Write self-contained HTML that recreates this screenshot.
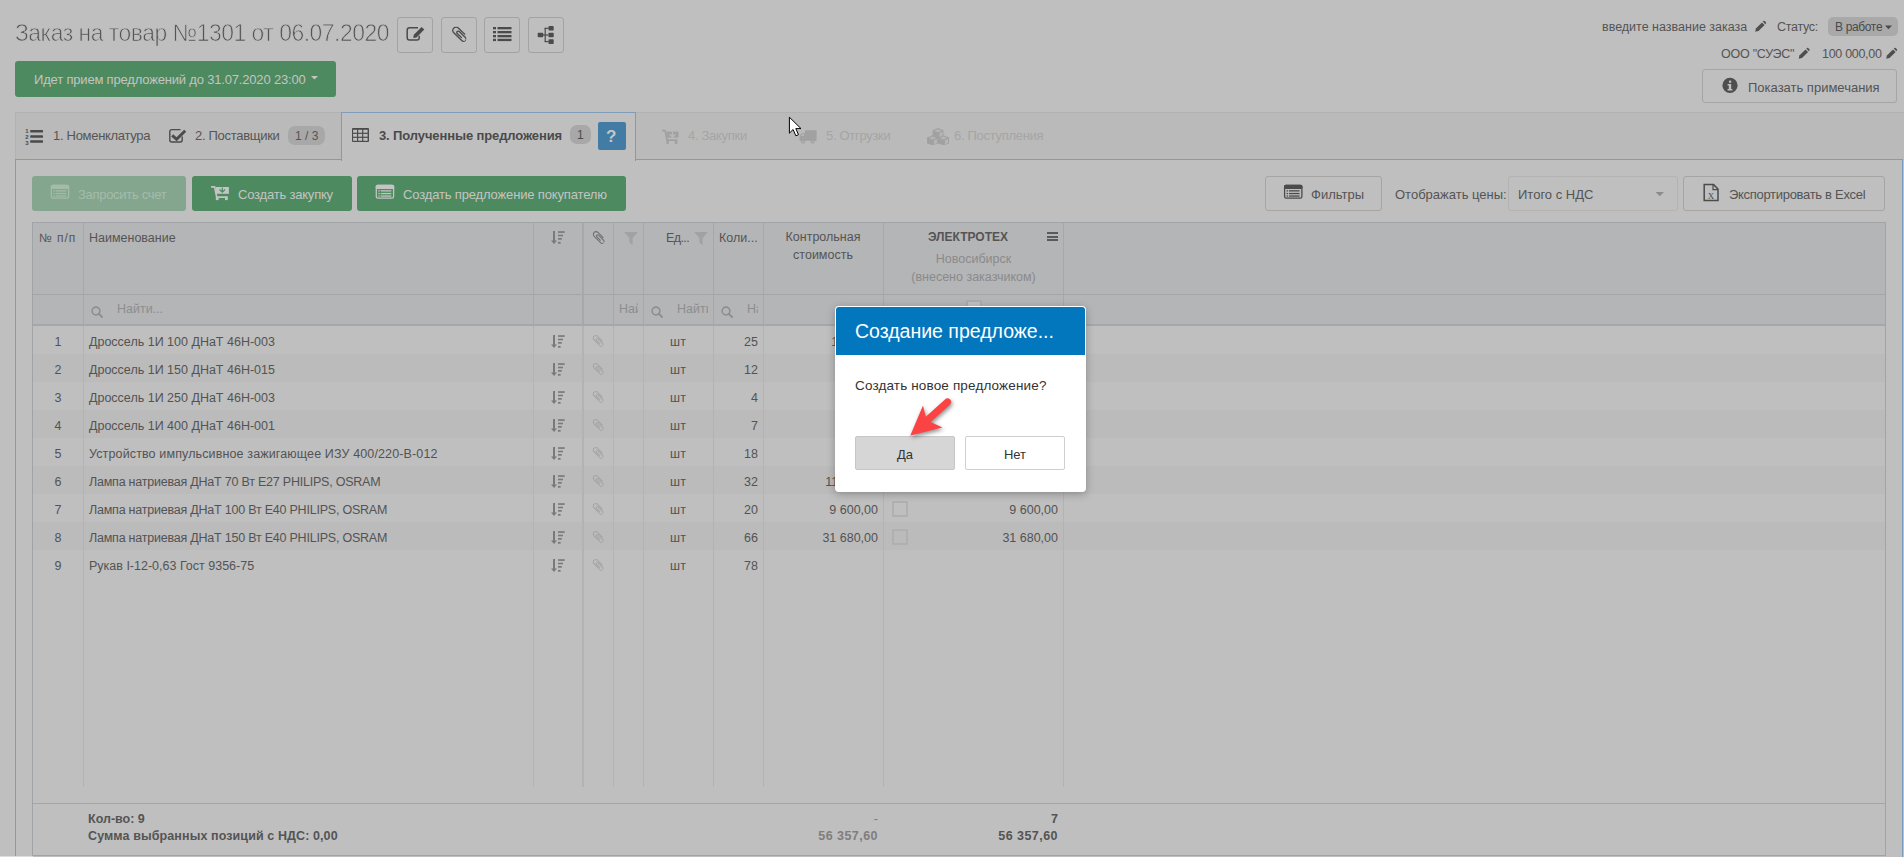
<!DOCTYPE html>
<html><head><meta charset="utf-8">
<style>
*{box-sizing:border-box}
html,body{margin:0;padding:0}
body{width:1904px;height:857px;overflow:hidden;position:relative;background:#bfbfbf;font-family:"Liberation Sans",sans-serif;color:#535353}
.a{position:absolute}
.t{position:absolute;white-space:nowrap;line-height:1}
.ib{position:absolute;top:17px;width:36px;height:36px;border:1px solid #a3a3a3;border-radius:3px}
.ib svg{position:absolute}
.gbtn{position:absolute;background:#4e8a5f;border-radius:3px}
.wbtn{position:absolute;border:1px solid #a5a5a5;border-radius:3px}
.tabbar{position:absolute;left:15px;top:112px;width:1889px;height:48px;background:#bababa;border-top:1px solid #b1b2b4;border-left:1px solid #b1b2b4}
.panel{position:absolute;left:15px;top:159px;width:1888px;height:720px;border:1px solid #7c9cb9}
.acttab{position:absolute;left:341px;top:112px;width:295px;height:49px;background:#bfbfbf;border:1px solid #7c9cb9;border-bottom:none}
.badge{position:absolute;background:#a8a8a8;border-radius:9px}
.grid{position:absolute;left:32px;top:222px;width:1854px;height:634px;border:1px solid #a1a4a7}
.hdr{position:absolute;left:33px;top:223px;width:1852px;height:101px;background:#b4b5b7}
.hl{position:absolute;height:1px;background:#a3a5a8}
.vl{position:absolute;width:1px;background:#a8a8a8}
.row2{position:absolute;left:33px;width:1852px;height:28px;background:#bbbbbb}

.c1{left:33px;width:50px;text-align:center;font-size:12.5px;color:#535353}
.c2{left:89px;font-size:12.5px;color:#535353}
.c5{left:643px;width:70px;text-align:center;font-size:12.5px;color:#535353}
.c6{left:713px;width:45px;text-align:right;font-size:12.5px;color:#535353}
.c7{left:763px;width:115px;text-align:right;font-size:12.5px;color:#535353}
.c8{left:883px;width:175px;text-align:right;font-size:12.5px;color:#535353}
.sorti{left:551px}
.clipi{left:592px}
.cb{left:892px;width:16px;height:16px;border:2px solid #b0b0b0;border-radius:1px}
.ht{position:absolute;white-space:nowrap;line-height:1;font-size:12.5px;color:#545454}
</style></head><body>


<svg width="0" height="0" style="position:absolute">
<defs>
<symbol id="sorticon" viewBox="0 0 14 13">
 <rect x="2" y="0" width="2" height="10" fill="#7a7a7a"/>
 <path d="M0 9.5 H6 L3 13 Z" fill="#7a7a7a"/>
 <rect x="7" y="0.2" width="6.7" height="1.7" fill="#7a7a7a"/>
 <rect x="7" y="3.7" width="5" height="1.6" fill="#7a7a7a"/>
 <rect x="7" y="7" width="3.8" height="1.7" fill="#7a7a7a"/>
 <rect x="7" y="10.9" width="2.6" height="1.8" fill="#7a7a7a"/>
</symbol>
<symbol id="clipicon" viewBox="-90 170 1345 1520">
 <path fill="#a4a4a4" d="M1248 1420q0 107-76 185t-181 78q-107 0-183-76l-777-776q-113-115-113-271 0-159 110-270t269-111q158 0 273 113l605 606q10 10 10 22 0 16-30.5 46.5t-46.5 30.5q-13 0-23-10l-606-607q-79-77-181-77-106 0-179 75t-73 181q0 105 76 181l776 777q63 63 145 63 64 0 106-42t42-106q0-82-63-145l-581-581q-26-24-60-24-29 0-48 19t-19 48q0 32 25 60l410 410q10 10 10 22 0 16-31 47t-47 31q-12 0-22-10l-410-410q-63-61-63-149 0-82 57-139t139-57q88 0 149 63l581 581q100 98 100 235z"/>
</symbol>
<symbol id="searchicon" viewBox="0 0 12 12">
 <circle cx="5" cy="5" r="3.9" fill="none" stroke="#8e8e8e" stroke-width="1.6"/>
 <path d="M7.8 7.8 L11 11" stroke="#8e8e8e" stroke-width="1.9" stroke-linecap="round"/>
</symbol>
<symbol id="funnel" viewBox="0 0 14 13">
 <path d="M0 0 H14 L8.6 6 V13 L5.4 10.5 V6 Z" fill="#a2a2a2"/>
</symbol>
<symbol id="pencil" viewBox="0 0 12 12">
 <path d="M0.5 11.5 L1.3 8.2 L8.3 1.2 L10.8 3.7 L3.8 10.7 Z" fill="#555"/>
 <path d="M9 0.5 L9.8 -0.3 Q10.5 -0.8 11.2 -0.1 L12.1 0.8 Q12.8 1.5 12.1 2.2 L11.5 3 Z" fill="#555"/>
</symbol>
<symbol id="listalt" viewBox="0 0 18 14">
 <rect x="0.8" y="0.8" width="16.4" height="12.4" rx="1.5" fill="none" stroke="currentColor" stroke-width="1.6"/>
 <rect x="0.8" y="0.8" width="16.4" height="2.6" fill="currentColor"/>
 <rect x="3" y="5" width="1.6" height="1.4" fill="currentColor"/>
 <rect x="5.6" y="5" width="9.4" height="1.4" fill="currentColor"/>
 <rect x="3" y="7.6" width="1.6" height="1.4" fill="currentColor"/>
 <rect x="5.6" y="7.6" width="9.4" height="1.4" fill="currentColor"/>
 <rect x="3" y="10.2" width="1.6" height="1.4" fill="currentColor"/>
 <rect x="5.6" y="10.2" width="9.4" height="1.4" fill="currentColor"/>
</symbol>
</defs></svg>

<!-- ===== TITLE ===== -->
<div class="t" style="left:15px;top:21px;font-size:24px;color:#555;letter-spacing:-0.52px;-webkit-text-stroke:0.75px #bfbfbf;transform:scaleX(0.955);transform-origin:0 0">Заказ на товар №1301 от 06.07.2020</div>

<!-- icon buttons -->
<div class="ib" style="left:397px"></div>
<div class="ib" style="left:441px"></div>
<div class="ib" style="left:484px"></div>
<div class="ib" style="left:528px"></div>

<!-- green status button -->
<div class="gbtn" style="left:15px;top:61px;width:321px;height:36px"></div>
<div class="t" style="left:34px;top:73px;font-size:13px;color:#c4c4c4;letter-spacing:-0.18px">Идет прием предложений до 31.07.2020 23:00</div>

<!-- top right -->
<div class="t" style="left:1602px;top:21px;font-size:12.5px;color:#545454">введите название заказа</div>
<div class="t" style="left:1777px;top:21px;font-size:12.5px;color:#545454;letter-spacing:-0.3px">Статус:</div>
<div class="badge" style="left:1828px;top:17px;width:70px;height:19px;border-radius:5px;background:#a9a9a9"></div>
<div class="t" style="left:1835px;top:21px;font-size:12px;color:#4a4a4a;letter-spacing:-0.35px">В работе</div>
<div class="t" style="left:1721px;top:48px;font-size:12.5px;color:#545454;letter-spacing:-0.25px">ООО "СУЭС"</div>
<div class="t" style="left:1822px;top:48px;font-size:12.5px;color:#545454;letter-spacing:-0.3px">100 000,00</div>
<div class="wbtn" style="left:1702px;top:69px;width:195px;height:34px"></div>
<div class="t" style="left:1748px;top:81px;font-size:13px;color:#545454">Показать примечания</div>

<!-- ===== TABS ===== -->
<div class="tabbar"></div>
<div class="panel"></div>
<div class="acttab"></div>

<div class="t" style="left:53px;top:129px;font-size:13px;color:#555;letter-spacing:-0.3px">1. Номенклатура</div>
<div class="t" style="left:195px;top:129px;font-size:13px;color:#555;letter-spacing:-0.3px">2. Поставщики</div>
<div class="badge" style="left:288px;top:126px;width:37px;height:19px;border-radius:7px"></div>
<div class="t" style="left:295px;top:130px;font-size:12px;color:#545454">1 / 3</div>
<div class="t" style="left:379px;top:129px;font-size:13px;color:#4a4a4a;font-weight:bold;letter-spacing:-0.12px">3. Полученные предложения</div>
<div class="badge" style="left:570px;top:125px;width:21px;height:19px;border-radius:7px"></div>
<div class="t" style="left:577px;top:129px;font-size:12px;color:#4a4a4a">1</div>
<div class="a" style="left:598px;top:122px;width:28px;height:28px;background:#427ca4;border-radius:2px"></div>
<div class="t" style="left:606px;top:128px;font-size:17px;color:#c6c6c6;font-weight:bold">?</div>
<div class="t" style="left:688px;top:129px;font-size:13px;color:#a5a5a5;letter-spacing:-0.3px">4. Закупки</div>
<div class="t" style="left:826px;top:129px;font-size:13px;color:#a5a5a5;letter-spacing:-0.3px">5. Отгрузки</div>
<div class="t" style="left:954px;top:129px;font-size:13px;color:#a5a5a5;letter-spacing:-0.3px">6. Поступления</div>

<!-- ===== TOOLBAR ===== -->
<div class="gbtn" style="left:32px;top:176px;width:154px;height:35px;background:#84a68e"></div>
<div class="t" style="left:78px;top:188px;font-size:13px;color:#a4bcaa;letter-spacing:-0.3px">Запросить счет</div>
<div class="gbtn" style="left:192px;top:176px;width:160px;height:35px"></div>
<div class="t" style="left:238px;top:188px;font-size:13px;color:#c4c4c4;letter-spacing:-0.2px">Создать закупку</div>
<div class="gbtn" style="left:357px;top:176px;width:269px;height:35px"></div>
<div class="t" style="left:403px;top:188px;font-size:13px;color:#c4c4c4;letter-spacing:-0.15px">Создать предложение покупателю</div>

<div class="wbtn" style="left:1265px;top:176px;width:117px;height:35px"></div>
<div class="t" style="left:1311px;top:188px;font-size:13px;color:#545454">Фильтры</div>
<div class="t" style="left:1395px;top:188px;font-size:13px;color:#545454">Отображать цены:</div>
<div class="wbtn" style="left:1508px;top:176px;width:170px;height:35px;border-color:#b3b3b3"></div>
<div class="t" style="left:1518px;top:188px;font-size:13px;color:#545454">Итого с НДС</div>
<div class="wbtn" style="left:1683px;top:176px;width:202px;height:35px"></div>
<div class="t" style="left:1729px;top:188px;font-size:13px;color:#545454;letter-spacing:-0.3px">Экспортировать в Excel</div>

<!-- ===== GRID ===== -->
<div class="grid"></div>
<div class="hdr"></div>


<!-- header lines -->
<div class="hl" style="left:33px;top:294px;width:1852px"></div>
<div class="hl" style="left:33px;top:324px;width:1852px;height:2px;background:#a5a7aa"></div>
<div class="row2" style="top:354px"></div>
<div class="row2" style="top:410px"></div>
<div class="row2" style="top:466px"></div>
<div class="row2" style="top:522px"></div>
<div class="t c1" style="top:336px">1</div>
<div class="t c2" style="top:336px">Дроссель 1И 100 ДНаТ 46Н-003</div>
<svg class="a sorti" style="top:335px" width="14" height="13"><use href="#sorticon"/></svg>
<svg class="a clipi" style="top:335px" width="12" height="12"><use href="#clipicon"/></svg>
<div class="t c5" style="top:336px">шт</div>
<div class="t c6" style="top:336px">25</div>
<div class="t c7" style="top:336px;left:765px">1 312,50</div>
<div class="t c1" style="top:364px">2</div>
<div class="t c2" style="top:364px">Дроссель 1И 150 ДНаТ 46Н-015</div>
<svg class="a sorti" style="top:363px" width="14" height="13"><use href="#sorticon"/></svg>
<svg class="a clipi" style="top:363px" width="12" height="12"><use href="#clipicon"/></svg>
<div class="t c5" style="top:364px">шт</div>
<div class="t c6" style="top:364px">12</div>
<div class="t c1" style="top:392px">3</div>
<div class="t c2" style="top:392px">Дроссель 1И 250 ДНаТ 46Н-003</div>
<svg class="a sorti" style="top:391px" width="14" height="13"><use href="#sorticon"/></svg>
<svg class="a clipi" style="top:391px" width="12" height="12"><use href="#clipicon"/></svg>
<div class="t c5" style="top:392px">шт</div>
<div class="t c6" style="top:392px">4</div>
<div class="t c1" style="top:420px">4</div>
<div class="t c2" style="top:420px">Дроссель 1И 400 ДНаТ 46Н-001</div>
<svg class="a sorti" style="top:419px" width="14" height="13"><use href="#sorticon"/></svg>
<svg class="a clipi" style="top:419px" width="12" height="12"><use href="#clipicon"/></svg>
<div class="t c5" style="top:420px">шт</div>
<div class="t c6" style="top:420px">7</div>
<div class="t c1" style="top:448px">5</div>
<div class="t c2" style="top:448px;letter-spacing:0.13px">Устройство импульсивное зажигающее ИЗУ 400/220-В-012</div>
<svg class="a sorti" style="top:447px" width="14" height="13"><use href="#sorticon"/></svg>
<svg class="a clipi" style="top:447px" width="12" height="12"><use href="#clipicon"/></svg>
<div class="t c5" style="top:448px">шт</div>
<div class="t c6" style="top:448px">18</div>
<div class="t c1" style="top:476px">6</div>
<div class="t c2" style="top:476px;letter-spacing:-0.22px">Лампа натриевая ДНаТ 70 Вт Е27 PHILIPS, OSRAM</div>
<svg class="a sorti" style="top:475px" width="14" height="13"><use href="#sorticon"/></svg>
<svg class="a clipi" style="top:475px" width="12" height="12"><use href="#clipicon"/></svg>
<div class="t c5" style="top:476px">шт</div>
<div class="t c6" style="top:476px">32</div>
<div class="t c7" style="top:476px;left:765px">11 520,00</div>
<div class="t c1" style="top:504px">7</div>
<div class="t c2" style="top:504px;letter-spacing:-0.22px">Лампа натриевая ДНаТ 100 Вт Е40 PHILIPS, OSRAM</div>
<svg class="a sorti" style="top:503px" width="14" height="13"><use href="#sorticon"/></svg>
<svg class="a clipi" style="top:503px" width="12" height="12"><use href="#clipicon"/></svg>
<div class="t c5" style="top:504px">шт</div>
<div class="t c6" style="top:504px">20</div>
<div class="t c7" style="top:504px">9 600,00</div>
<div class="a cb" style="top:501px"></div>
<div class="t c8" style="top:504px">9 600,00</div>
<div class="t c1" style="top:532px">8</div>
<div class="t c2" style="top:532px;letter-spacing:-0.22px">Лампа натриевая ДНаТ 150 Вт Е40 PHILIPS, OSRAM</div>
<svg class="a sorti" style="top:531px" width="14" height="13"><use href="#sorticon"/></svg>
<svg class="a clipi" style="top:531px" width="12" height="12"><use href="#clipicon"/></svg>
<div class="t c5" style="top:532px">шт</div>
<div class="t c6" style="top:532px">66</div>
<div class="t c7" style="top:532px">31 680,00</div>
<div class="a cb" style="top:529px"></div>
<div class="t c8" style="top:532px">31 680,00</div>
<div class="t c1" style="top:560px">9</div>
<div class="t c2" style="top:560px">Рукав I-12-0,63 Гост 9356-75</div>
<svg class="a sorti" style="top:559px" width="14" height="13"><use href="#sorticon"/></svg>
<svg class="a clipi" style="top:559px" width="12" height="12"><use href="#clipicon"/></svg>
<div class="t c5" style="top:560px">шт</div>
<div class="t c6" style="top:560px">78</div>
<!-- vertical lines -->
<div class="vl" style="left:83px;top:223px;height:101px;width:1px;background:#a6a8ab"></div>
<div class="vl" style="left:83px;top:326px;height:461px;width:1px;background:#b2b3b5"></div>
<div class="vl" style="left:533px;top:223px;height:101px;width:1px;background:#a6a8ab"></div>
<div class="vl" style="left:533px;top:326px;height:461px;width:1px;background:#b2b3b5"></div>
<div class="vl" style="left:582px;top:223px;height:101px;width:2px;background:#a6a8ab"></div>
<div class="vl" style="left:582px;top:326px;height:461px;width:2px;background:#b2b3b5"></div>
<div class="vl" style="left:613px;top:223px;height:101px;width:1px;background:#a6a8ab"></div>
<div class="vl" style="left:613px;top:326px;height:461px;width:1px;background:#b2b3b5"></div>
<div class="vl" style="left:643px;top:223px;height:101px;width:1px;background:#a6a8ab"></div>
<div class="vl" style="left:643px;top:326px;height:461px;width:1px;background:#b2b3b5"></div>
<div class="vl" style="left:713px;top:223px;height:101px;width:1px;background:#a6a8ab"></div>
<div class="vl" style="left:713px;top:326px;height:461px;width:1px;background:#b2b3b5"></div>
<div class="vl" style="left:763px;top:223px;height:101px;width:1px;background:#a6a8ab"></div>
<div class="vl" style="left:763px;top:326px;height:461px;width:1px;background:#b2b3b5"></div>
<div class="vl" style="left:883px;top:223px;height:101px;width:1px;background:#a6a8ab"></div>
<div class="vl" style="left:883px;top:326px;height:461px;width:1px;background:#b2b3b5"></div>
<div class="vl" style="left:1063px;top:223px;height:101px;width:1px;background:#a6a8ab"></div>
<div class="vl" style="left:1063px;top:326px;height:461px;width:1px;background:#b2b3b5"></div>

<!-- header texts -->
<div class="ht" style="left:39px;top:232px;font-size:12px;letter-spacing:0.9px">№ п/п</div>
<div class="ht" style="left:89px;top:232px">Наименование</div>
<svg class="a" style="left:551px;top:231px" width="14" height="13"><use href="#sorticon"/></svg>
<svg class="a" style="left:592px;top:231px" width="13" height="13" viewBox="-90 170 1345 1520"><path fill="#707070" d="M1248 1420q0 107-76 185t-181 78q-107 0-183-76l-777-776q-113-115-113-271 0-159 110-270t269-111q158 0 273 113l605 606q10 10 10 22 0 16-30.5 46.5t-46.5 30.5q-13 0-23-10l-606-607q-79-77-181-77-106 0-179 75t-73 181q0 105 76 181l776 777q63 63 145 63 64 0 106-42t42-106q0-82-63-145l-581-581q-26-24-60-24-29 0-48 19t-19 48q0 32 25 60l410 410q10 10 10 22 0 16-31 47t-47 31q-12 0-22-10l-410-410q-63-61-63-149 0-82 57-139t139-57q88 0 149 63l581 581q100 98 100 235z"/></svg>
<svg class="a" style="left:624px;top:232px" width="14" height="13"><use href="#funnel"/></svg>
<div class="ht" style="left:666px;top:232px;letter-spacing:-0.6px">Ед...</div>
<svg class="a" style="left:694px;top:232px" width="14" height="13"><use href="#funnel"/></svg>
<div class="ht" style="left:719px;top:232px">Коли...</div>
<div class="ht" style="left:763px;top:232px;width:120px;text-align:center;line-height:18px;top:228px;white-space:normal">Контрольная<br>стоимость</div>
<div class="ht" style="left:883px;top:231px;width:170px;text-align:center;font-weight:bold;font-size:12px">ЭЛЕКТРОТЕХ</div>
<div class="a" style="left:1047px;top:232px;width:11px;height:2px;background:#5a5a5a"></div>
<div class="a" style="left:1047px;top:235.5px;width:11px;height:2px;background:#5a5a5a"></div>
<div class="a" style="left:1047px;top:239px;width:11px;height:2px;background:#5a5a5a"></div>
<div class="ht" style="left:883px;top:253px;width:181px;text-align:center;color:#8a8a8a">Новосибирск</div>
<div class="ht" style="left:883px;top:271px;width:181px;text-align:center;color:#8a8a8a">(внесено заказчиком)</div>

<!-- filter row -->
<svg class="a" style="left:91px;top:306px" width="12" height="12"><use href="#searchicon"/></svg>
<div class="ht" style="left:117px;top:303px;color:#8d8d8d">Найти...</div>
<div class="a" style="left:614px;top:295px;width:24px;height:29px;overflow:hidden"><div class="ht" style="left:5px;top:8px;color:#8d8d8d">Найти</div></div>
<svg class="a" style="left:651px;top:306px" width="12" height="12"><use href="#searchicon"/></svg>
<div class="a" style="left:644px;top:295px;width:64px;height:29px;overflow:hidden"><div class="ht" style="left:33px;top:8px;color:#8d8d8d">Найти...</div></div>
<svg class="a" style="left:721px;top:306px" width="12" height="12"><use href="#searchicon"/></svg>
<div class="a" style="left:714px;top:295px;width:44px;height:29px;overflow:hidden"><div class="ht" style="left:33px;top:8px;color:#8d8d8d">Найти...</div></div>
<div class="a" style="left:966px;top:300px;width:16px;height:16px;background:#c1c1c1;border:2px solid #abacae"></div>

<!-- footer -->
<div class="hl" style="left:33px;top:803px;width:1852px"></div>
<div class="ht" style="left:88px;top:813px;font-weight:bold;color:#545454">Кол-во: 9</div>
<div class="ht" style="left:88px;top:830px;font-weight:bold;color:#545454;letter-spacing:0.1px">Сумма выбранных позиций с НДС: 0,00</div>
<div class="ht" style="left:763px;top:813px;width:115px;text-align:right;color:#7e7e7e">-</div>
<div class="ht" style="left:763px;top:830px;width:115px;text-align:right;font-weight:bold;color:#7e7e7e;letter-spacing:0.45px">56 357,60</div>
<div class="ht" style="left:883px;top:813px;width:175px;text-align:right;font-weight:bold;color:#545454">7</div>
<div class="ht" style="left:883px;top:830px;width:175px;text-align:right;font-weight:bold;color:#545454;letter-spacing:0.45px">56 357,60</div>


<svg class="a" style="left:0;top:0" width="1904" height="857" viewBox="0 0 1904 857">
<!-- edit -->
<path d="M418 27.75 H409.5 Q407.2 27.75 407.2 30 V37.7 Q407.2 39.95 409.5 39.95 H417 Q419.2 39.95 419.2 37.7 V35.8" fill="none" stroke="#4b4b4b" stroke-width="1.5"/>
<path d="M413.2 37.9 L413.8 34.7 L421.6 26.9 L424.3 29.6 L416.5 37.4 Z" fill="#4b4b4b"/>
<!-- paperclip -->
<svg x="452" y="26.5" width="14.3" height="15.5" viewBox="-90 170 1345 1520" preserveAspectRatio="none"><path fill="#4b4b4b" d="M1248 1420q0 107-76 185t-181 78q-107 0-183-76l-777-776q-113-115-113-271 0-159 110-270t269-111q158 0 273 113l605 606q10 10 10 22 0 16-30.5 46.5t-46.5 30.5q-13 0-23-10l-606-607q-79-77-181-77-106 0-179 75t-73 181q0 105 76 181l776 777q63 63 145 63 64 0 106-42t42-106q0-82-63-145l-581-581q-26-24-60-24-29 0-48 19t-19 48q0 32 25 60l410 410q10 10 10 22 0 16-31 47t-47 31q-12 0-22-10l-410-410q-63-61-63-149 0-82 57-139t139-57q88 0 149 63l581 581q100 98 100 235z"/></svg>
<!-- list -->
<g fill="#4b4b4b">
<rect x="493" y="27" width="3" height="2.3"/><rect x="497.5" y="27" width="14" height="2.3"/>
<rect x="493" y="31" width="3" height="2.3"/><rect x="497.5" y="31" width="14" height="2.3"/>
<rect x="493" y="35" width="3" height="2.3"/><rect x="497.5" y="35" width="14" height="2.3"/>
<rect x="493" y="38.8" width="3" height="2.3"/><rect x="497.5" y="38.8" width="14" height="2.3"/>
</g>
<!-- sitemap -->
<g fill="#4b4b4b">
<rect x="537.7" y="32.8" width="5.5" height="4.5" rx="0.8"/>
<rect x="548.5" y="26" width="5.2" height="4.6" rx="0.8"/>
<rect x="548.5" y="32.7" width="5.2" height="4.6" rx="0.8"/>
<rect x="548.5" y="39.3" width="5.2" height="4.7" rx="0.8"/>
<rect x="544.6" y="28" width="1.2" height="13.6"/>
<rect x="543" y="34.4" width="5.6" height="1.2"/>
<rect x="544.6" y="27.7" width="4" height="1.2"/>
<rect x="544.6" y="41" width="4" height="1.2"/>
</g>
<!-- green btn caret -->
<path d="M311 76 H318 L314.5 79.6 Z" fill="#c4c4c4"/>
<!-- pencils -->
<g transform="translate(1755,21)" fill="#4e4e4e"><path d="M0.2 10.8 L0.9 7.5 L7.0 1.4 L9.6 4.0 L3.5 10.1 Z"/><path d="M7.8 0.6 L8.5 -0.1 Q9.1 -0.5 9.7 0.1 L10.9 1.3 Q11.4 1.9 10.9 2.5 L10.3 3.2 Z"/></g>
<g transform="translate(1798.5,48)" fill="#4e4e4e"><path d="M0.2 10.8 L0.9 7.5 L7.0 1.4 L9.6 4.0 L3.5 10.1 Z"/><path d="M7.8 0.6 L8.5 -0.1 Q9.1 -0.5 9.7 0.1 L10.9 1.3 Q11.4 1.9 10.9 2.5 L10.3 3.2 Z"/></g>
<g transform="translate(1886,48)" fill="#4e4e4e"><path d="M0.2 10.8 L0.9 7.5 L7.0 1.4 L9.6 4.0 L3.5 10.1 Z"/><path d="M7.8 0.6 L8.5 -0.1 Q9.1 -0.5 9.7 0.1 L10.9 1.3 Q11.4 1.9 10.9 2.5 L10.3 3.2 Z"/></g>
<!-- status caret -->
<path d="M1885 25.6 H1892 L1888.5 29.2 Z" fill="#4a4a4a"/>
<!-- info -->
<circle cx="1730" cy="85.4" r="7.6" fill="#4e4e4e"/>
<rect x="1729" y="80.6" width="2.2" height="2.2" fill="#bfbfbf"/>
<path d="M1727.6 84 H1731.2 V89 H1732.4 V90.4 H1727.6 V89 H1728.8 V85.4 H1727.6 Z" fill="#bfbfbf"/>

<!-- tab: ol -->
<g fill="#4b4b4b">
<rect x="30.2" y="130.1" width="12.8" height="2.5" rx="0.5"/>
<rect x="30.2" y="135.2" width="12.8" height="2.5" rx="0.5"/>
<rect x="30.2" y="140.3" width="12.8" height="2.5" rx="0.5"/>
<text x="27" y="132.8" font-size="6" font-weight="bold" text-anchor="middle" font-family="Liberation Sans">1</text>
<text x="27" y="138.6" font-size="6" font-weight="bold" text-anchor="middle" font-family="Liberation Sans">2</text>
<text x="27" y="144.6" font-size="6" font-weight="bold" text-anchor="middle" font-family="Liberation Sans">3</text>
</g>
<!-- tab: check-square -->
<path d="M180.5 129.6 H171.8 Q169.8 129.6 169.8 131.6 V140 Q169.8 142 171.8 142 H180.2 Q182.2 142 182.2 140 V136.5" fill="none" stroke="#4b4b4b" stroke-width="1.4"/>
<path d="M172.2 135.3 L176.6 139.3 L185.2 130.7" fill="none" stroke="#4b4b4b" stroke-width="3"/>
<!-- tab: table -->
<rect x="352" y="128" width="17" height="14" rx="1" fill="#4b4b4b"/>
<g fill="#bfbfbf">
<rect x="353.1" y="129.8" width="3.9" height="2.9"/><rect x="358.2" y="129.8" width="3.9" height="2.9"/><rect x="363.3" y="129.8" width="4.3" height="2.9"/>
<rect x="353.1" y="133.9" width="3.9" height="2.8"/><rect x="358.2" y="133.9" width="3.9" height="2.8"/><rect x="363.3" y="133.9" width="4.3" height="2.8"/>
<rect x="353.1" y="137.9" width="3.9" height="2.9"/><rect x="358.2" y="137.9" width="3.9" height="2.9"/><rect x="363.3" y="137.9" width="4.3" height="2.9"/>
</g>
<!-- help ? drawn as text elsewhere -->
<!-- tab: cart disabled -->
<g fill="#a1a1a1">
<path d="M662 129.8 H665.8 L667.8 139.2 H677.3 V140.9 H666.4 L664.4 131.4 H662 Z"/>
<rect x="666.5" y="131.6" width="12" height="6"/>
<rect x="666.3" y="140.8" width="2.6" height="3.1"/>
<rect x="674.8" y="140.8" width="2.6" height="3.1"/>
</g>
<path d="M669.6 134.2 L672.5 137 L675.4 134.2 M672.5 132 V137" fill="none" stroke="#b9b9b9" stroke-width="1.3"/>
<!-- tab: truck disabled -->
<g fill="#a1a1a1">
<rect x="805" y="130.3" width="11.6" height="10.4" rx="0.5"/>
<path d="M799.5 140.7 V136 L801.8 133.2 H805 V140.7 Z"/>
<circle cx="803" cy="141.6" r="2.1"/><circle cx="812.6" cy="141.6" r="2.1"/>
</g>
<path d="M800.8 136 L802.3 134.3 H804 V136 Z" fill="#b9b9b9"/>
<circle cx="803" cy="141.6" r="0.9" fill="#b9b9b9"/><circle cx="812.6" cy="141.6" r="0.9" fill="#b9b9b9"/>
<!-- tab: cubes disabled -->
<g fill="#a1a1a1">
<path d="M938 128 L943.5 130.2 V136.5 L938 138.7 L932.5 136.5 V130.2 Z"/>
<path d="M932.5 135.2 L938 137.4 V143.4 L932.5 145.2 L927 143.4 V137.4 Z"/>
<path d="M943.5 135.2 L949 137.4 V143.4 L943.5 145.2 L938 143.4 V137.4 Z"/>
</g>
<g fill="#b5b5b5">
<path d="M938 129.3 L941.8 130.8 L938 132.3 L934.2 130.8 Z"/>
<path d="M932.5 136.5 L936.3 138 L932.5 139.5 L928.7 138 Z"/>
<path d="M943.5 136.5 L947.3 138 L943.5 139.5 L939.7 138 Z"/>
<path d="M939.5 133 L942.5 131.8 V135.8 L939.5 137 Z"/>
<path d="M934 140.2 L937 139 V143 L934 144.2 Z"/>
<path d="M945 140.2 L948 139 V143 L945 144.2 Z"/>
</g>

<!-- toolbar icons -->
<g fill="#a3bba9">
<rect x="51.300000000000004" y="185.4" width="17.3" height="12.8" rx="1.6" fill="none" stroke="#a3bba9" stroke-width="1.3"/>
<rect x="50.7" y="184.8" width="18.5" height="4.3" rx="1.6"/>
<rect x="53.300000000000004" y="190.20000000000002" width="1.5" height="1.3"/><rect x="55.7" y="190.20000000000002" width="10.6" height="1.3"/>
<rect x="53.300000000000004" y="192.9" width="1.5" height="1.3"/><rect x="55.7" y="192.9" width="10.6" height="1.3"/>
<rect x="53.300000000000004" y="195.4" width="1.5" height="1.3"/><rect x="55.7" y="195.4" width="10.6" height="1.3"/>
</g>
<g fill="#c4c4c4">
<path d="M211 186 H215.3 L217.4 196.3 H227.8 V198 H216 L214 187.8 H211 Z"/>
<rect x="215.8" y="187" width="13.1" height="6.8"/>
<rect x="215.8" y="197.5" width="2.8" height="2.6"/>
<rect x="225" y="197.5" width="2.8" height="2.6"/>
</g>
<path d="M219.5 189.5 L222.3 192.2 L225.1 189.5 M222.3 187.5 V192.2" fill="none" stroke="#4e8a5f" stroke-width="1.2"/>
<g fill="#c4c4c4">
<rect x="376.3" y="185.4" width="17.3" height="12.8" rx="1.6" fill="none" stroke="#c4c4c4" stroke-width="1.3"/>
<rect x="375.7" y="184.8" width="18.5" height="4.3" rx="1.6"/>
<rect x="378.3" y="190.20000000000002" width="1.5" height="1.3"/><rect x="380.7" y="190.20000000000002" width="10.6" height="1.3"/>
<rect x="378.3" y="192.9" width="1.5" height="1.3"/><rect x="380.7" y="192.9" width="10.6" height="1.3"/>
<rect x="378.3" y="195.4" width="1.5" height="1.3"/><rect x="380.7" y="195.4" width="10.6" height="1.3"/>
</g>
<g fill="#4b4b4b">
<rect x="1284.6" y="185.4" width="17.3" height="12.8" rx="1.6" fill="none" stroke="#4b4b4b" stroke-width="1.3"/>
<rect x="1284" y="184.8" width="18.5" height="4.3" rx="1.6"/>
<rect x="1286.6" y="190.20000000000002" width="1.5" height="1.3"/><rect x="1289" y="190.20000000000002" width="10.6" height="1.3"/>
<rect x="1286.6" y="192.9" width="1.5" height="1.3"/><rect x="1289" y="192.9" width="10.6" height="1.3"/>
<rect x="1286.6" y="195.4" width="1.5" height="1.3"/><rect x="1289" y="195.4" width="10.6" height="1.3"/>
</g>
<!-- excel -->
<path d="M1704.2 184.6 H1713.6 L1718 189 V200.5 H1704.2 Z" fill="none" stroke="#4b4b4b" stroke-width="1.5"/>
<path d="M1713 184.8 V189.6 H1717.8" fill="none" stroke="#4b4b4b" stroke-width="1.2"/>
<text x="1711" y="198.6" font-size="9" text-anchor="middle" font-family="Liberation Serif" fill="#4b4b4b">X</text>
<!-- select caret -->
<path d="M1655.5 192 H1664 L1659.75 196.2 Z" fill="#8c8c8c"/>
</svg>

<div class="a" style="left:0;top:856px;width:33px;height:1px;background:#dcdcdc"></div>
<!-- ===== MODAL ===== -->
<div class="a" style="left:835px;top:306px;width:251px;height:186px;background:#fff;border-radius:4px;box-shadow:0 2px 8px rgba(0,0,0,0.27)"></div>
<div class="a" style="left:836px;top:307px;width:249px;height:48px;background:#0277bd;border-radius:3px 3px 0 0"></div>
<div class="t" style="left:855px;top:322px;font-size:19.5px;color:#fff">Создание предложе...</div>
<div class="t" style="left:855px;top:379px;font-size:13.5px;color:#333;letter-spacing:0.15px">Создать новое предложение?</div>
<div class="a" style="left:855px;top:436px;width:100px;height:34px;background:#d6d6d6;border:1px solid #c6c6c6;border-radius:2px"></div>
<div class="t" style="left:855px;top:448px;width:100px;text-align:center;font-size:13px;color:#333">Да</div>
<div class="a" style="left:965px;top:436px;width:100px;height:34px;background:#fff;border:1px solid #cfcfcf;border-radius:2px"></div>
<div class="t" style="left:965px;top:448px;width:100px;text-align:center;font-size:13px;color:#333">Нет</div>

<!-- red arrow -->
<svg class="a" style="left:895px;top:395px;filter:drop-shadow(1px 2px 2px rgba(0,0,0,0.45))" width="60" height="50" viewBox="895 395 60 50">
 <path d="M910.3 435.5 L923 405.4 L925.8 416.8 L945.0 399.4 A3.6 3.6 0 0 1 949.9 404.7 L930.6 422.1 L942.4 427.5 Z" fill="#fb4343"/>
</svg>

<!-- cursor -->
<svg class="a" style="left:788px;top:116px" width="14" height="22" viewBox="0 0 14 22">
 <path d="M1.4 1.2 L1.4 17.2 L5.1 13.5 L7.9 19.8 L10.5 18.7 L7.8 12.6 L13 12.6 Z" fill="#fff" stroke="#000" stroke-width="1" stroke-linejoin="round"/>
</svg>

</body></html>
